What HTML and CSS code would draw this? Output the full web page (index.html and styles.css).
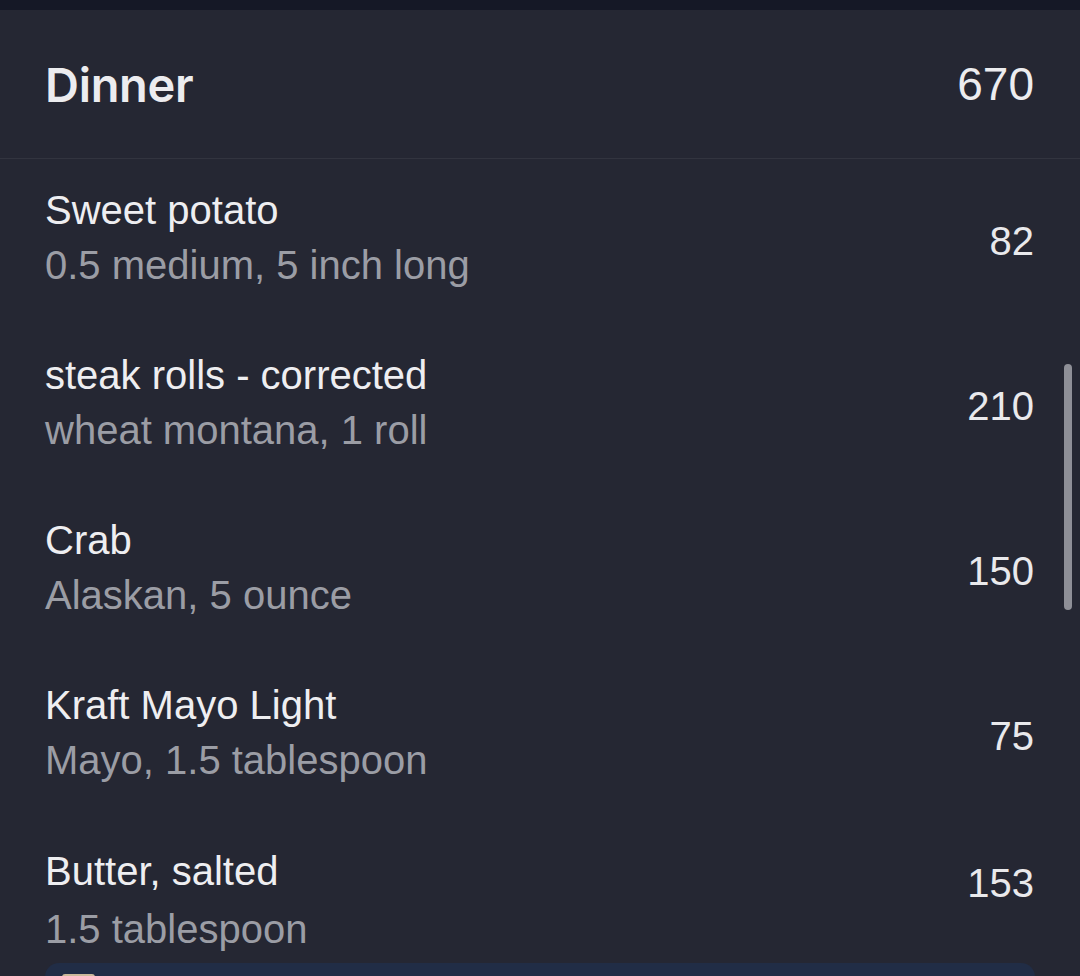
FILE: index.html
```html
<!DOCTYPE html>
<html lang="en">
<head>
<meta charset="utf-8">
<title>Dinner</title>
<link rel="stylesheet" href="styles.css">
</head>
<body>
<div class="topbar"></div>
<main class="screen">
  <header class="meal-header">
    <h1 class="meal-title">Dinner</h1>
    <span class="meal-total">670</span>
  </header>
  <ul class="food-list">
    <li class="row">
      <div class="info">
        <div class="name">Sweet potato</div>
        <div class="desc">0.5 medium, 5 inch long</div>
      </div>
      <div class="kcal">82</div>
    </li>
    <li class="row">
      <div class="info">
        <div class="name">steak rolls - corrected</div>
        <div class="desc">wheat montana, 1 roll</div>
      </div>
      <div class="kcal">210</div>
    </li>
    <li class="row">
      <div class="info">
        <div class="name">Crab</div>
        <div class="desc">Alaskan, 5 ounce</div>
      </div>
      <div class="kcal">150</div>
    </li>
    <li class="row">
      <div class="info">
        <div class="name">Kraft Mayo Light</div>
        <div class="desc">Mayo, 1.5 tablespoon</div>
      </div>
      <div class="kcal">75</div>
    </li>
    <li class="row row--last">
      <div class="info">
        <div class="name">Butter, salted</div>
        <div class="desc">1.5 tablespoon</div>
      </div>
      <div class="kcal">153</div>
    </li>
  </ul>
  <div class="card">
    <div class="card-chip"></div>
  </div>
  <div class="scrollbar"></div>
</main>
</body>
</html>
```

FILE: styles.css
```css
html, body {
  margin: 0;
  padding: 0;
  background: #252733;
  height: 100%;
  overflow: hidden;
}

body {
  font-family: "Liberation Sans", Arial, sans-serif;
  color: #ededf0;
}

.topbar {
  height: 10px;
  background: #151826;
}

.screen {
  position: relative;
  height: 966px;
  display: flex;
  flex-direction: column;
}

.meal-header {
  display: flex;
  justify-content: space-between;
  align-items: center;
  height: 148px;
  padding: 0 46px 0 45px;
  border-bottom: 1px solid #32343f;
  flex: none;
}

.meal-title {
  margin: 0;
  font-family: Inter, "Liberation Sans", sans-serif;
  font-size: 47px;
  font-weight: 600;
  letter-spacing: -0.3px;
  color: #ececef;
}

.meal-total {
  font-size: 46px;
  color: #ececef;
}

.food-list {
  list-style: none;
  margin: 0;
  padding: 0;
  flex: none;
}

.row {
  display: flex;
  justify-content: space-between;
  align-items: center;
  height: 165px;
  padding: 0 46px 0 45px;
}

.info {
  padding-bottom: 8px;
}

.name {
  font-size: 40px;
  line-height: 55px;
  color: #eeeef1;
}

.desc {
  font-size: 40px;
  line-height: 55px;
  color: #9b9da5;
}

.kcal {
  font-size: 40px;
  line-height: 55px;
  color: #e9e9ec;
}

.row--last {
  height: 144px;
  align-items: flex-start;
}

.row--last .info {
  padding: 25px 0 0;
}

.row--last .desc {
  line-height: 61px;
}

.row--last .kcal {
  margin-top: 37px;
}

.card {
  flex: 1;
  margin: 0 45px;
  padding: 11px 17px 0;
  background: #212d46;
  border-radius: 14px 14px 0 0;
}

.card-chip {
  width: 33px;
  height: 20px;
  background: #cbb99b;
  border-radius: 3px;
}

.scrollbar {
  position: absolute;
  top: 354px;
  right: 8px;
  width: 8px;
  height: 246px;
  border-radius: 4px;
  background: #8e8f97;
}
```
